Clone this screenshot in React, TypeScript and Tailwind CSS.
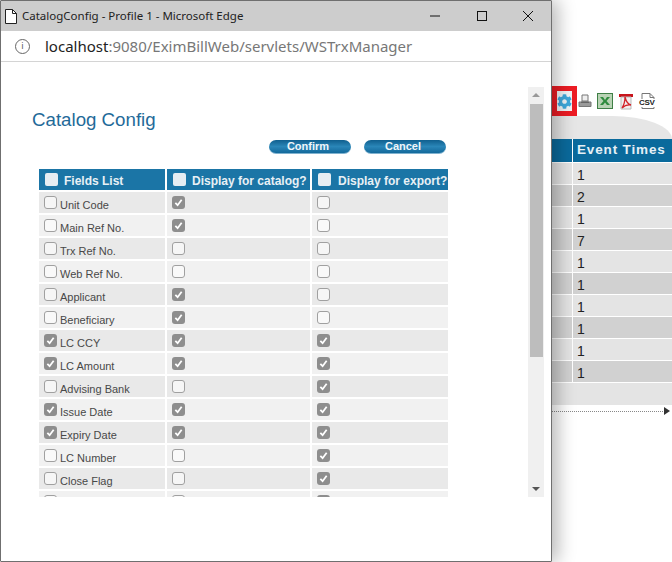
import { FaCog } from "react-icons/fa";

type Field = { label: string; list: boolean; catalog: boolean; exportOn: boolean };

const fields: Field[] = [
  { label: "Unit Code", list: false, catalog: true, exportOn: false },
  { label: "Main Ref No.", list: false, catalog: true, exportOn: false },
  { label: "Trx Ref No.", list: false, catalog: false, exportOn: false },
  { label: "Web Ref No.", list: false, catalog: false, exportOn: false },
  { label: "Applicant", list: false, catalog: true, exportOn: false },
  { label: "Beneficiary", list: false, catalog: true, exportOn: false },
  { label: "LC CCY", list: true, catalog: true, exportOn: true },
  { label: "LC Amount", list: true, catalog: true, exportOn: true },
  { label: "Advising Bank", list: false, catalog: false, exportOn: true },
  { label: "Issue Date", list: true, catalog: true, exportOn: true },
  { label: "Expiry Date", list: true, catalog: true, exportOn: true },
  { label: "LC Number", list: false, catalog: false, exportOn: true },
  { label: "Close Flag", list: false, catalog: false, exportOn: true },
  { label: "", list: false, catalog: false, exportOn: true },
];

const eventTimes = [1, 2, 1, 7, 1, 1, 1, 1, 1, 1];

function Check({ on }: { on: boolean }) {
  if (on) {
    return (
      <span className="flex h-[13px] w-[13px] shrink-0 items-center justify-center rounded-[3px] bg-[#8e8e8e]">
        <svg width="9" height="9" viewBox="0 0 10 10" fill="none">
          <path d="M1.5 5.5 4 8l4.5-6" stroke="#fff" strokeWidth="2" />
        </svg>
      </span>
    );
  }
  return <span className="block h-[13px] w-[13px] shrink-0 rounded-[3px] border border-[#a0a0a0] bg-white/60" />;
}

function HeadCell({ label, gap }: { label: string; gap: string }) {
  return (
    <div className="flex h-[21px] items-start bg-[#1b75a6] pl-[6px] text-[12px] font-bold text-[#e8f0f5]">
      <span className="mt-[4px] h-[13px] w-[13px] shrink-0 rounded-[2px] bg-[#e6edf2]" />
      <span className={`mt-[5px] leading-[14px] whitespace-nowrap ${gap}`}>{label}</span>
    </div>
  );
}

function PillButton({ label }: { label: string }) {
  return (
    <button className="flex h-[14px] w-[82px] items-center justify-center rounded-full border-b border-[#7fb2cf] bg-gradient-to-b from-[#0f5f8e] via-[#2a86b8] to-[#12699b] pr-[4px] text-[11px] font-bold text-[#f0f6fa]">
      {label}
    </button>
  );
}

function ToolIcons() {
  return (
    <div className="flex h-[30px] items-center">
      <div className="flex h-[30px] w-[25px] items-center justify-center border-[5px] border-[#ed1c24] bg-[#f1f5f7]">
        <FaCog className="text-[15px] text-[#3fa9dc]" />
      </div>
      <svg className="ml-[1px]" width="14" height="14" viewBox="0 0 14 14">
        <path d="M4 1h6v6H4z" fill="#eee" stroke="#777" />
        <path d="M1 8h12v4.5H1z" fill="#9a9a9a" stroke="#777" />
        <path d="M3 7.5h8v1.5H3z" fill="#666" />
      </svg>
      <svg className="ml-[5px]" width="16" height="16" viewBox="0 0 16 16">
        <rect x="0.5" y="0.5" width="15" height="15" fill="#b9d3b5" stroke="#3f7f46" />
        <path d="M3 4h3l2 3 2-3h3l-3.5 4L13 12h-3L8 9.5 6 12H3l3.5-4z" fill="#2e8b3d" />
      </svg>
      <svg className="ml-[5px]" width="16" height="17" viewBox="0 0 16 17">
        <path d="M1 1h14v3H1z" fill="#c8141c" />
        <path d="M3 4h10v12H3z" fill="#f2efef" stroke="#bbb" />
        <path d="M7 4c1 4 2 7 6 8-3-.5-6 0-9 3 2-3 3-7 3-11z" fill="none" stroke="#d2232a" strokeWidth="1.3" />
      </svg>
      <div className="relative ml-[5px] h-[16px] w-[16px]">
        <svg width="14" height="16" viewBox="0 0 14 16" className="ml-[2px]">
          <path d="M1 .5h8l4 4v11H1z" fill="#fff" stroke="#777" />
          <path d="M9 .5v4h4" fill="none" stroke="#777" />
        </svg>
        <span className="absolute top-[6px] left-0 bg-white text-[8px] leading-[8px] font-bold tracking-[-0.3px] text-[#222]">CSV</span>
      </div>
    </div>
  );
}

export default function App() {
  return (
    <div className="flex h-[562px] w-[672px] overflow-hidden bg-white font-['Liberation_Sans',sans-serif]">
      <div className="relative z-10 flex h-[562px] w-[552px] shrink-0 flex-col rounded-[1px] border border-[#6f6f6f] bg-white shadow-[6px_0_18px_rgba(0,0,0,0.28)]">
        <div className="flex h-[30px] shrink-0 items-center bg-[#cdcdcd] pl-[2px] font-['Noto_Sans',sans-serif] text-[11.5px] text-[#222]">
          <svg width="14" height="18" viewBox="0 0 14 18" fill="none" className="ml-[1px]">
            <path d="M1.5 2.5h7l4 4v10h-11z" fill="#fff" stroke="#222" />
            <path d="M8.5 2.5v4h4" stroke="#222" />
          </svg>
          <span className="ml-[4px]">CatalogConfig - Profile 1 - Microsoft Edge</span>
          <div className="ml-auto flex items-center">
            <svg width="12" height="12" viewBox="0 0 12 12" className="mr-[35px]">
              <path d="M1 6h10" stroke="#111" />
            </svg>
            <svg width="12" height="12" viewBox="0 0 12 12" className="mr-[34px]">
              <rect x="1.5" y="1.5" width="9" height="9" fill="none" stroke="#111" />
            </svg>
            <svg width="12" height="12" viewBox="0 0 12 12" className="mr-[17px]">
              <path d="M1 1l10 10M11 1 1 11" stroke="#111" />
            </svg>
          </div>
        </div>
        <div className="flex h-[31px] shrink-0 items-center border-b border-[#d4d4d4] bg-white pl-[14px] font-['Noto_Sans',sans-serif] text-[15px] text-[#777]">
          <span className="flex h-[15px] w-[15px] items-center justify-center rounded-full border border-[#666] text-[9px] text-[#555]">i</span>
          <span className="ml-[15px] whitespace-nowrap">
            <span className="text-[#222]">localhost</span>:9080/EximBillWeb/servlets/WSTrxManager
          </span>
        </div>
        <div className="flex flex-1 items-start pt-[25px]">
          <div className="h-[410px] w-[527px] shrink-0 overflow-hidden pl-[38px]">
            <h1 className="mt-[21px] -ml-[7px] text-[18.7px] leading-[24px] font-normal text-[#1f6a99]">Catalog Config</h1>
            <div className="mt-[8px] flex w-[407px] justify-end gap-[13px]">
              <PillButton label="Confirm" />
              <PillButton label="Cancel" />
            </div>
            <div className="mt-[15px] grid w-[409px] grid-cols-[126px_143px_136px] gap-[2px]">
              <HeadCell label="Fields List" gap="ml-[6px]" />
              <HeadCell label="Display for catalog?" gap="ml-[6px]" />
              <HeadCell label="Display for export?" gap="ml-[7px]" />
              {fields.map((f, i) => {
                const bg = i % 2 === 0 ? "bg-[#e9e9e9]" : "bg-[#f1f1f1]";
                return [
                  <div key={`${i}-a`} className={`flex h-[21px] items-start pt-[4px] pl-[5px] ${bg}`}>
                    <Check on={f.list} />
                    <span className="mt-[3px] ml-[3px] text-[11px] leading-[13px] whitespace-nowrap text-[#484848]">{f.label}</span>
                  </div>,
                  <div key={`${i}-b`} className={`h-[21px] pt-[4px] pl-[5px] ${bg}`}>
                    <Check on={f.catalog} />
                  </div>,
                  <div key={`${i}-c`} className={`h-[21px] pt-[4px] pl-[5px] ${bg}`}>
                    <Check on={f.exportOn} />
                  </div>,
                ];
              })}
            </div>
          </div>
          <div className="flex h-[410px] w-[16px] shrink-0 flex-col items-center bg-[#f0f0f0]">
            <svg width="8" height="17" viewBox="0 0 8 17">
              <path d="M0 10 4 6l4 4z" fill="#999" />
            </svg>
            <div className="h-[253px] w-[13px] bg-[#bdbdbd]" />
            <svg width="8" height="16" viewBox="0 0 8 16" className="mt-auto">
              <path d="M0 6h8l-4 4z" fill="#555" />
            </svg>
          </div>
        </div>
      </div>

      <div className="flex w-[120px] shrink-0 flex-col">
        <div className="mt-[86px]">
          <ToolIcons />
        </div>
        <div className="h-[23px] rounded-tr-[60px_23px] bg-[#e6e6e6]" />
        <div className="flex h-[24px] border-b border-white bg-[#0a6a9c]">
          <div className="w-[21px] border-r border-white" />
          <div className="flex items-center pl-[4px] text-[13.5px] font-bold tracking-[0.85px] whitespace-nowrap text-[#e6f0f6]">Event Times</div>
        </div>
        {eventTimes.map((n, i) => (
          <div key={i} className={`flex h-[22px] border-b border-white ${i % 2 === 0 ? "bg-[#e4e4e4]" : "bg-[#d1d1d1]"}`}>
            <div className="w-[21px] border-r border-white" />
            <div className="pl-[4px] text-[14px] leading-[24px] text-[#222]">{n}</div>
          </div>
        ))}
        <div className="h-[22px] bg-[#e4e4e4]" />
        <div className="mt-[2px] flex items-center">
          <div className="flex-1 border-t border-dotted border-[#888]" />
          <svg width="8" height="8" viewBox="0 0 8 8" className="mr-[1px]">
            <path d="M1 0l6 4-6 4z" fill="#333" />
          </svg>
        </div>
      </div>
    </div>
  );
}
